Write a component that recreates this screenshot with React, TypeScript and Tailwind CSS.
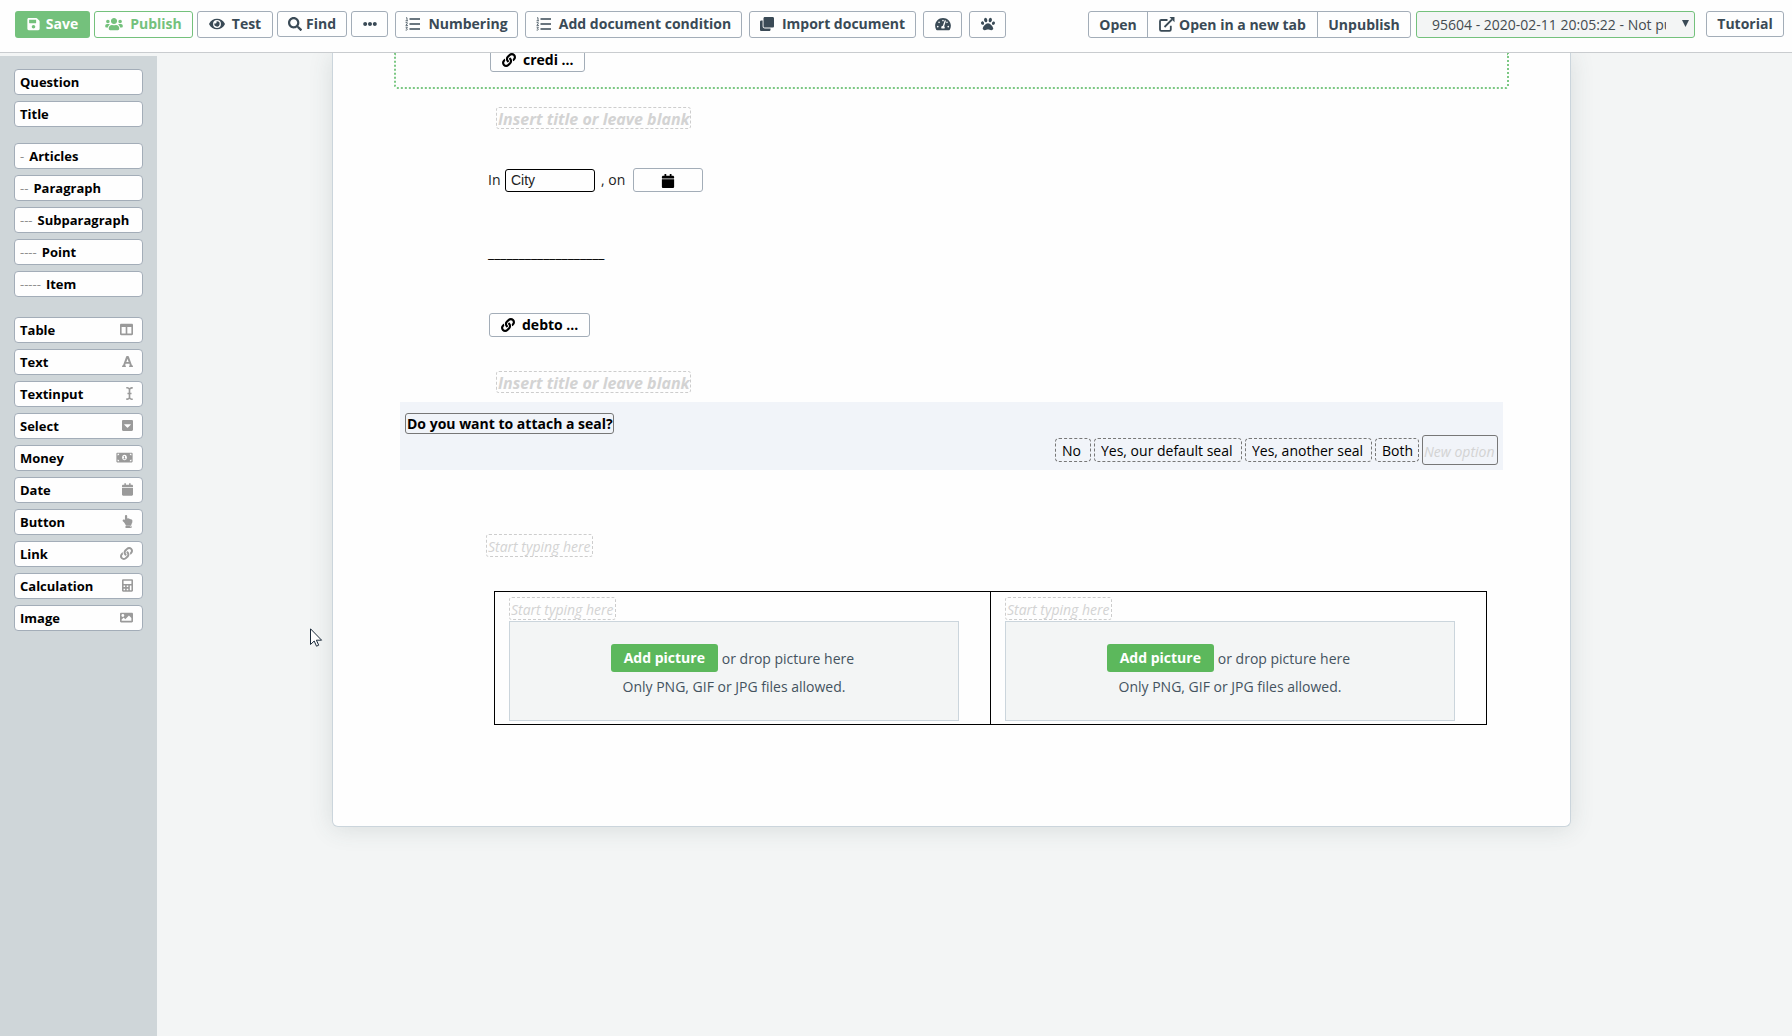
import type { ReactNode } from "react";
import {
  FaCalculator,
  FaCalendar,
  FaCaretSquareDown,
  FaClone,
  FaColumns,
  FaEllipsisH,
  FaEye,
  FaFont,
  FaHandPointUp,
  FaICursor,
  FaImage,
  FaLink,
  FaMoneyBillAlt,
  FaPaw,
  FaSave,
  FaSearch,
  FaTachometerAlt,
  FaUsers,
} from "react-icons/fa";

const STRUCTURE = ["Articles", "Paragraph", "Subparagraph", "Point", "Item"];

const FIELDS: { label: string; icon: ReactNode }[] = [
  { label: "Table", icon: <FaColumns className="w-[13px]" /> },
  { label: "Text", icon: <FaFont className="w-[11px]" /> },
  { label: "Textinput", icon: <FaICursor className="w-[7px]" /> },
  { label: "Select", icon: <FaCaretSquareDown className="w-[11px]" /> },
  { label: "Money", icon: <FaMoneyBillAlt className="w-[17px]" /> },
  { label: "Date", icon: <FaCalendar className="w-[11px]" /> },
  { label: "Button", icon: <FaHandPointUp className="w-[11px]" /> },
  { label: "Link", icon: <FaLink className="w-[13px]" /> },
  { label: "Calculation", icon: <FaCalculator className="w-[11px]" /> },
  { label: "Image", icon: <FaImage className="w-[13px]" /> },
];

const OPTIONS = [
  { label: "No", cls: "w-9" },
  { label: "Yes, our default seal", cls: "w-[148px]" },
  { label: "Yes, another seal", cls: "w-[127px]" },
  { label: "Both", cls: "w-11" },
];

function ListIcon() {
  return (
    <svg width="15" height="14" viewBox="0 0 15 14" fill="none" stroke="currentColor">
      <path d="M4.500 2H15M4.500 7H15M4.500 12H15" strokeWidth="1.7" />
      <path d="M1 .8h1v3M.5 3.8h2.5M.6 5.6h1.6v1L.8 8.400H3M.6 10.200h1.800L1.400 11.400c1.400 0 1.400 2-.8 1.700" strokeWidth=".8" />
    </svg>
  );
}

function ExternalIcon() {
  return (
    <svg width="16" height="15" viewBox="0 0 16 15" fill="none" stroke="currentColor" strokeWidth="1.8">
      <path d="M8.500 3H2.300Q1 3 1 4.300v8.200Q1 13.800 2.300 13.800h8.200q1.300 0 1.300-1.300V8.800" />
      <path d="M5.500 10 13 2.500" />
      <path d="M10.500 0H15.500V5.200Z" fill="currentColor" stroke="none" />
    </svg>
  );
}

function ToolButton({ children, cls, label }: { children: ReactNode; cls: string; label?: string }) {
  return (
    <button
      type="button"
      aria-label={label}
      className={`flex shrink-0 items-center justify-center rounded-[3px] border border-[#a3adb8] bg-[#fefefe] font-bold whitespace-nowrap ${cls}`}
    >
      {children}
    </button>
  );
}

function SideButton({ children }: { children: ReactNode }) {
  return (
    <button
      type="button"
      className="flex h-[26px] w-full items-center rounded-[4px] border border-[#a3adb8] bg-[#fefefe] pr-[9px] pl-[5px] text-left text-[13px] font-bold text-black"
    >
      {children}
    </button>
  );
}

function LinkChip({ label, cls }: { label: string; cls: string }) {
  return (
    <button
      type="button"
      className={`flex h-6 items-center gap-[7px] rounded-[3px] border border-[#a3adb8] bg-[#fefefe] pl-[11px] leading-[14px] font-bold whitespace-nowrap text-black ${cls}`}
    >
      <FaLink size={14} />
      {label}
    </button>
  );
}

function TitleInput({ cls }: { cls: string }) {
  return (
    <input
      aria-label="Title"
      placeholder="Insert title or leave blank"
      className={`block h-[22px] w-[195px] rounded-[3px] border border-dashed border-[#cdcdcd] pt-0.5 pl-px text-base leading-[18px] font-bold italic placeholder:text-[#d3d3d3] placeholder:opacity-100 ${cls}`}
    />
  );
}

function TypingInput({ cls = "" }: { cls?: string }) {
  return (
    <input
      aria-label="Text"
      placeholder="Start typing here"
      className={`block h-[23px] w-[107px] rounded-[3px] border border-dashed border-[#cdcdcd] pt-0.5 pl-px italic placeholder:text-[#d3d3d3] placeholder:opacity-100 ${cls}`}
    />
  );
}

function PictureCell() {
  return (
    <td className="border border-black pt-[5px] pb-[3px] pl-[14px] align-top">
      <TypingInput />
      <div className="mt-px flex h-[100px] w-[450px] flex-col items-center border border-[#cbd5dc] bg-[#f3f5f5] pt-[22px] text-[#44535f]">
        <div className="flex items-center gap-1 pr-[3px]">
          <button type="button" className="h-7 w-[107px] rounded-[3px] bg-[#5cb85c] font-bold text-white">
            Add picture
          </button>
          <span className="pt-0.5">or drop picture here</span>
        </div>
        <p className="mt-[3px] leading-6">Only PNG, GIF or JPG files allowed.</p>
      </div>
    </td>
  );
}

function Toolbar() {
  return (
    <header className="flex h-[53px] items-start border-b border-[#c9cccf] bg-[#fefefe] pt-[11px] pr-2 pl-[15px] text-[#3a4a56]">
      <div className="flex gap-1 [&_svg]:h-[14px]">
        <button
          type="button"
          className="flex h-[27px] w-[75px] items-center justify-center gap-[6px] rounded-[3px] bg-[#74c17c] pb-px font-bold text-white"
        >
          <FaSave className="w-[13px]" />
          Save
        </button>
        <button
          type="button"
          className="flex h-[27px] w-[99px] items-center justify-center gap-[7px] rounded-[3px] border border-[#74c17c] bg-[#fefefe] pb-px font-bold text-[#74c17c]"
        >
          <FaUsers className="w-[18px]" />
          Publish
        </button>
        <ToolButton cls="h-[27px] w-[76px] gap-[7px] pb-px"><FaEye className="w-4" />Test</ToolButton>
        <ToolButton cls="h-[26px] w-[70px] gap-1"><FaSearch className="w-[14px]" />Find</ToolButton>
        <ToolButton cls="h-[26px] w-[37px]" label="More"><FaEllipsisH className="w-[14px]" /></ToolButton>
      </div>
      <div className="ml-[7px] flex gap-[7px] [&_svg]:h-[14px]">
        <ToolButton cls="h-[27px] w-[123px] gap-2 pb-px"><ListIcon />Numbering</ToolButton>
        <ToolButton cls="h-[27px] w-[217px] gap-2 pb-px"><ListIcon />Add document condition</ToolButton>
        <ToolButton cls="h-[27px] w-[167px] gap-2 pb-px"><FaClone />Import document</ToolButton>
        <ToolButton cls="h-[27px] w-[39px] pb-px" label="Dashboard"><FaTachometerAlt className="w-4" /></ToolButton>
        <ToolButton cls="h-[27px] w-[37px] pb-px" label="Paw"><FaPaw /></ToolButton>
      </div>
      <div className="ml-auto flex">
        <ToolButton cls="h-[27px] w-[60px] rounded-r-none">Open</ToolButton>
        <ToolButton cls="-ml-px h-[27px] w-[171px] gap-1 rounded-none"><ExternalIcon />Open in a new tab</ToolButton>
        <ToolButton cls="-ml-px h-[27px] w-[94px] rounded-l-none">Unpublish</ToolButton>
        <div className="relative ml-[5px]">
          <select
            aria-label="Version"
            className="h-[27px] w-[279px] appearance-none rounded-[3px] border border-[#74c17c] bg-[#f3f5f5] pr-7 pl-[15px] text-[#444b50]"
          >
            <option>95604 - 2020-02-11 20:05:22 - Not published</option>
          </select>
          <span className="pointer-events-none absolute top-[9px] right-[6px] h-[7px] w-[7px] bg-[#3a4a56] [clip-path:polygon(0_0,100%_0,50%_100%)]" />
        </div>
        <ToolButton cls="ml-[11px] h-[26px] w-[78px]">Tutorial</ToolButton>
      </div>
    </header>
  );
}

function Sidebar() {
  return (
    <aside className="mt-[3px] w-[157px] shrink-0 bg-[#cfd6d9] px-[14px] pt-[13px]">
      <div className="flex flex-col gap-[6px]">
        <SideButton>Question</SideButton>
        <SideButton>Title</SideButton>
      </div>
      <div className="mt-4 flex flex-col gap-[6px]">
        {STRUCTURE.map((label, i) => (
          <SideButton key={label}>
            <span className="mr-[5px] font-normal text-[#8f8f8f]">{"-".repeat(i + 1)}</span>
            {label}
          </SideButton>
        ))}
      </div>
      <div className="mt-5 flex flex-col gap-[6px]">
        {FIELDS.map((f) => (
          <SideButton key={f.label}>
            {f.label}
            <span className="mb-0.5 ml-auto text-[#9a9a9a] [&_svg]:h-[13px]">{f.icon}</span>
          </SideButton>
        ))}
      </div>
    </aside>
  );
}

function DocumentPage() {
  return (
    <div className="overflow-hidden rounded-b-[6px] border border-t-0 border-[#cbd5dc] bg-[#fefefe] px-[61px] pb-[101px] shadow-[0_2px_24px_rgba(60,80,80,0.14)]">
      <div className="flow-root h-9 rounded-b-[3px] border-2 border-t-0 border-dotted border-[#7cc884]">
        <LinkChip label="credi ..." cls="-mt-[5px] ml-[94px] w-[95px]" />
      </div>
      <TitleInput cls="mt-[18px] ml-[102px]" />
      <div className="mt-[39px] ml-[94px] flex items-center text-[#222]">
        <label htmlFor="city" className="w-[17px]">In</label>
        <input
          id="city"
          defaultValue="City"
          className="h-[23px] w-[90px] rounded-[3px] border border-black px-[5px] font-['Liberation_Sans',sans-serif] text-sm"
        />
        <span className="ml-[6px] w-8">, on</span>
        <button
          type="button"
          aria-label="Pick a date"
          className="flex h-6 w-[70px] items-center justify-center rounded-[3px] border border-[#a3adb8] pt-0.5 text-black"
        >
          <FaCalendar size={14} />
        </button>
      </div>
      <p className="mt-[51px] ml-[94px] leading-5 text-black">___________________</p>
      <LinkChip label="debto ..." cls="mt-[50px] ml-[95px] w-[101px]" />
      <TitleInput cls="mt-[34px] ml-[102px]" />
      <section className="mx-[6px] mt-[9px] h-[68px] bg-[#f1f4f9] pt-[11px] pr-[5px] pl-[5px]">
        <input
          aria-label="Question"
          defaultValue="Do you want to attach a seal?"
          className="block h-[21px] w-[209px] rounded-[3px] border border-[#777] pl-px font-bold text-black"
        />
        <div className="mt-px flex items-center justify-end gap-[3px]">
          {OPTIONS.map((o) => (
            <input
              key={o.label}
              aria-label="Option"
              defaultValue={o.label}
              className={`h-6 rounded-[4px] border border-dashed border-[#777] pl-[6px] text-black ${o.cls}`}
            />
          ))}
          <input
            aria-label="New option"
            placeholder="New option"
            className="h-[30px] w-[76px] rounded-[3px] border border-[#777] pt-0.5 pl-px italic placeholder:text-[#d3d3d3] placeholder:opacity-100"
          />
        </div>
      </section>
      <TypingInput cls="mt-16 ml-[92px]" />
      <table className="mt-[34px] ml-[100px] w-[calc(100%-122px)] table-fixed border-collapse">
        <tbody>
          <tr>
            <PictureCell />
            <PictureCell />
          </tr>
        </tbody>
      </table>
    </div>
  );
}

export default function App() {
  return (
    <div className="flex min-h-screen flex-col bg-[#f3f5f5] font-['Open_Sans',sans-serif] text-sm">
      <Toolbar />
      <div className="flex grow">
        <Sidebar />
        <main className="relative grow overflow-hidden pr-[221px] pl-[175px]">
          <DocumentPage />
          <svg className="absolute top-[575px] left-[153px]" width="13" height="19" viewBox="0 0 13 19">
            <path d="M.5.8v15.700l3.700-3.500 2.300 5.200 2.200-1-2.300-5h5.200z" fill="#fff" stroke="#1b2a3a" />
          </svg>
        </main>
      </div>
    </div>
  );
}
